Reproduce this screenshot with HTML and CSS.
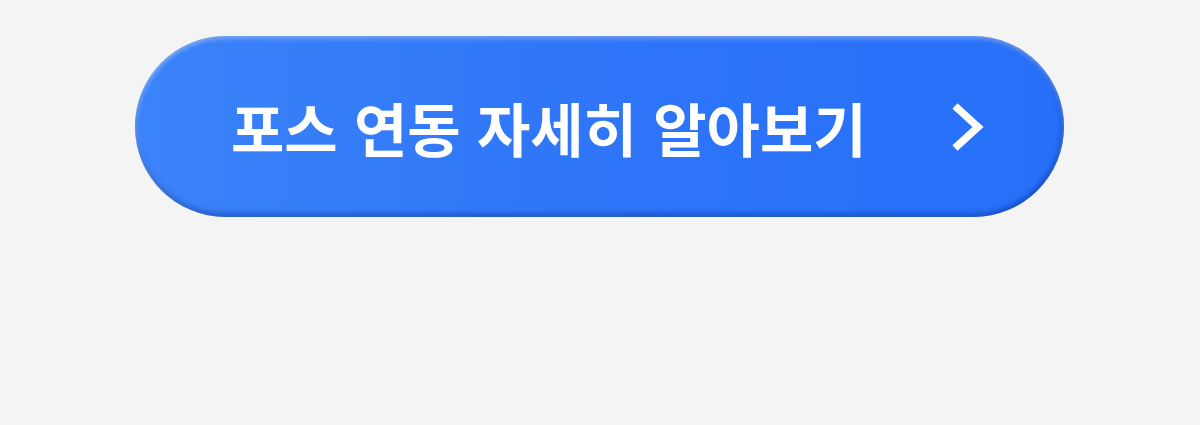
FILE: index.html
```html
<!DOCTYPE html>
<html lang="ko">
<head>
    <meta charset="UTF-8">
    <meta name="viewport" content="width=device-width, initial-scale=1.0">
    <title>포스 연동</title>
    <link rel="stylesheet" href="styles.css">
</head>
<body>
    <div class="page">
        <a class="cta" href="#">
            <span class="cta-label">포스 연동 자세히 알아보기</span>
            <svg class="cta-arrow" width="32" height="48" viewBox="0 0 32 48">
                <path d="M3 3 L26 24 L3 45" fill="none" stroke="#fff" stroke-width="7.5"/>
            </svg>
        </a>
    </div>
</body>
</html>
```

FILE: styles.css
```css
body {
    margin: 0;
    background-color: #f4f4f4;
    font-family: "Noto Sans CJK KR", "Noto Sans", sans-serif;
}
.page {
    padding-top: 36px;
    padding-left: 135px;
}
.cta {
    display: flex;
    align-items: center;
    justify-content: space-between;
    box-sizing: border-box;
    width: 929px;
    height: 181px;
    padding: 0 80px 0 96px;
    border-radius: 91px;
    background: linear-gradient(90deg, #3b83f9 0%, #2d74f8 55%, #2670f8 100%);
    box-shadow: inset 0 3px 4px rgba(255, 255, 255, 0.3),
                inset 0 -4px 5px rgba(0, 40, 140, 0.35),
                inset 3px 0 5px rgba(255, 255, 255, 0.12),
                inset -3px 0 5px rgba(0, 40, 140, 0.25);
    text-decoration: none;
    color: #fff;
}
.cta-label {
    font-size: 58px;
    font-weight: bold;
    letter-spacing: 0;
    line-height: 1;
}
.cta-arrow {
    display: block;
}
```
